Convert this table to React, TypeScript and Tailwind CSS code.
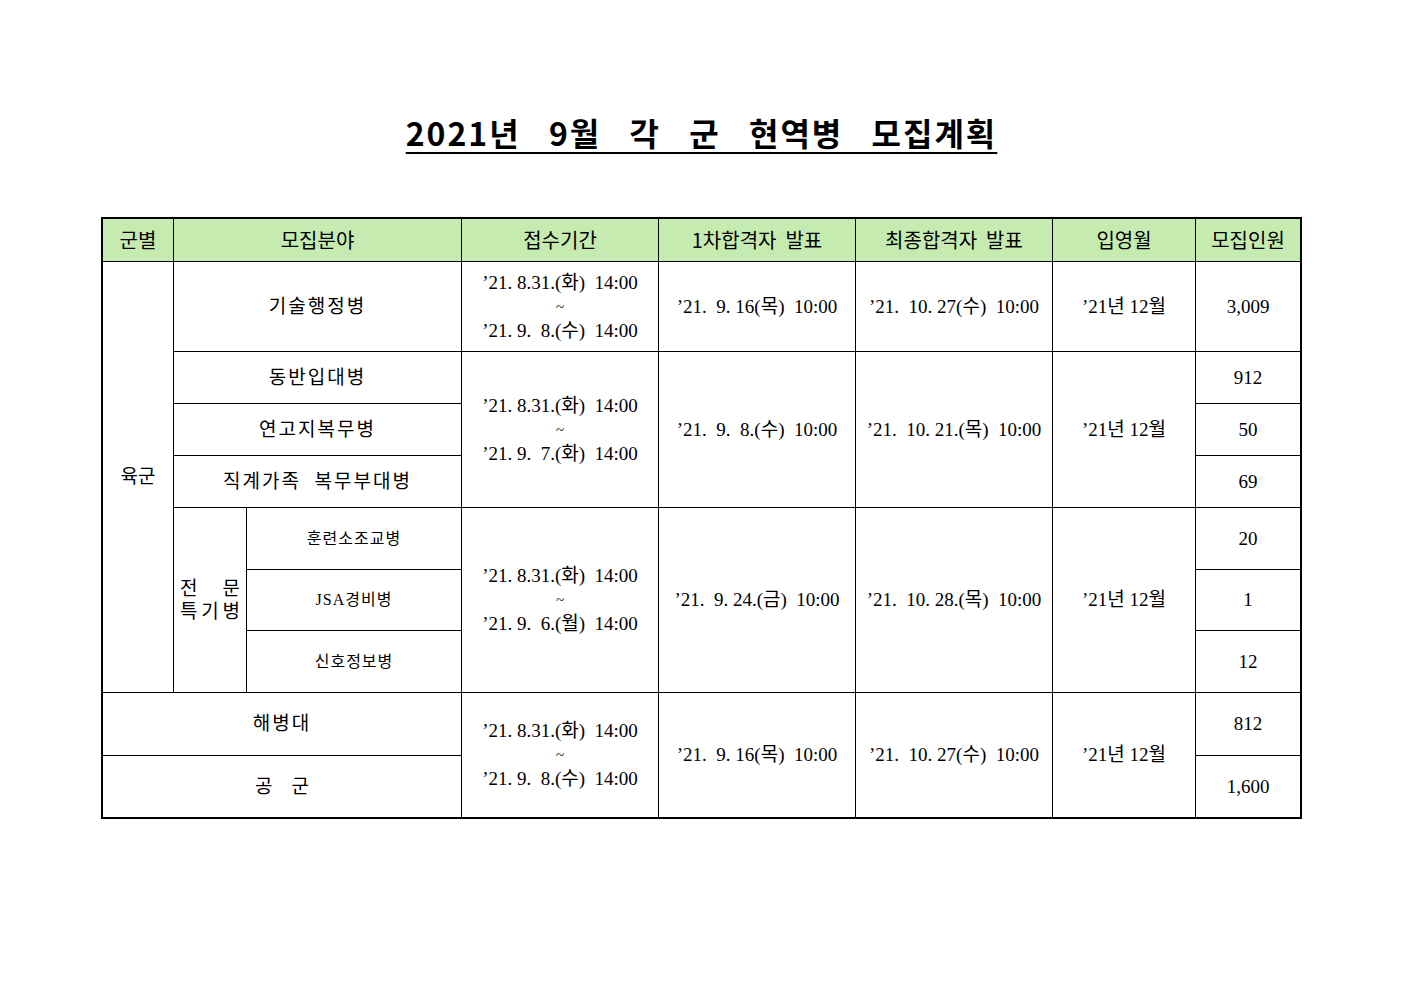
import React from 'react';

const head = "bg-[#c5ebb1] flex items-center justify-center font-['Noto_Sans_CJK_KR',sans-serif] text-[20px] text-black";
const body = "bg-white flex items-center justify-center text-center font-['Liberation_Serif','Noto_Sans_CJK_KR',serif] text-[19px] text-black leading-[24px]";
const small = "bg-white flex items-center justify-center text-center font-['Liberation_Serif','Noto_Sans_CJK_KR',serif] text-[16px] text-black";

const Period: React.FC<{ end: string }> = ({ end }) => (
  <div className="flex flex-col items-center whitespace-pre">
    <span>{"’21. 8.31.(화)  14:00"}</span>
    <span className="text-[15px] leading-[24px]">~</span>
    <span>{end}</span>
  </div>
);

const App: React.FC = () => {
  return (
    <div className="w-[1403px] h-[992px] bg-white pt-[108px]">
      <h1 className="text-center font-['Noto_Sans_CJK_KR',sans-serif] font-bold text-[32px] leading-[48px] tracking-[2px] [word-spacing:19px] text-black">
        <span className="underline decoration-2 underline-offset-[6px]">2021년 9월 각 군 현역병 모집계획</span>
      </h1>

      <div className="mt-[61px] ml-[101px] w-fit border-2 border-black bg-black">
        <div className="grid gap-px grid-cols-[70px_72px_214px_196px_196px_196px_142px_104px] grid-rows-[42px_89px_51px_51px_51px_61px_60px_61px_62px_61px]">
          {/* header */}
          <div className={`${head} col-start-1 row-start-1`}>군별</div>
          <div className={`${head} col-start-2 col-span-2 row-start-1`}>모집분야</div>
          <div className={`${head} col-start-4 row-start-1`}>접수기간</div>
          <div className={`${head} col-start-5 row-start-1 whitespace-pre`}>1차합격자  발표</div>
          <div className={`${head} col-start-6 row-start-1 whitespace-pre`}>최종합격자  발표</div>
          <div className={`${head} col-start-7 row-start-1`}>입영월</div>
          <div className={`${head} col-start-8 row-start-1`}>모집인원</div>

          {/* 육군 */}
          <div className={`${body} col-start-1 row-start-2 row-span-7`}>육군</div>

          <div className={`${body} col-start-2 col-span-2 row-start-2 tracking-[2px]`}>기술행정병</div>
          <div className={`${body} col-start-4 row-start-2`}>
            <Period end={"’21. 9.  8.(수)  14:00"} />
          </div>
          <div className={`${body} col-start-5 row-start-2 whitespace-pre`}>{"’21.  9. 16(목)  10:00"}</div>
          <div className={`${body} col-start-6 row-start-2 whitespace-pre`}>{"’21.  10. 27(수)  10:00"}</div>
          <div className={`${body} col-start-7 row-start-2`}>’21년 12월</div>
          <div className={`${body} col-start-8 row-start-2`}>3,009</div>

          <div className={`${body} col-start-2 col-span-2 row-start-3 tracking-[2px]`}>동반입대병</div>
          <div className={`${body} col-start-2 col-span-2 row-start-4 tracking-[2px]`}>연고지복무병</div>
          <div className={`${body} col-start-2 col-span-2 row-start-5 tracking-[2px] whitespace-pre`}>직계가족  복무부대병</div>
          <div className={`${body} col-start-4 row-start-3 row-span-3`}>
            <Period end={"’21. 9.  7.(화)  14:00"} />
          </div>
          <div className={`${body} col-start-5 row-start-3 row-span-3 whitespace-pre`}>{"’21.  9.  8.(수)  10:00"}</div>
          <div className={`${body} col-start-6 row-start-3 row-span-3 whitespace-pre`}>{"’21.  10. 21.(목)  10:00"}</div>
          <div className={`${body} col-start-7 row-start-3 row-span-3`}>’21년 12월</div>
          <div className={`${body} col-start-8 row-start-3`}>912</div>
          <div className={`${body} col-start-8 row-start-4`}>50</div>
          <div className={`${body} col-start-8 row-start-5`}>69</div>

          <div className={`${body} col-start-2 row-start-6 row-span-3`}>
            <div className="flex flex-col w-[60px] leading-[23px]">
              <div className="flex justify-between"><span>전</span><span>문</span></div>
              <div className="flex justify-between"><span>특</span><span>기</span><span>병</span></div>
            </div>
          </div>
          <div className={`${small} col-start-3 row-start-6 tracking-[1px]`}>훈련소조교병</div>
          <div className={`${small} col-start-3 row-start-7 tracking-[1px]`}>JSA경비병</div>
          <div className={`${small} col-start-3 row-start-8 tracking-[1px]`}>신호정보병</div>
          <div className={`${body} col-start-4 row-start-6 row-span-3`}>
            <Period end={"’21. 9.  6.(월)  14:00"} />
          </div>
          <div className={`${body} col-start-5 row-start-6 row-span-3 whitespace-pre`}>{"’21.  9. 24.(금)  10:00"}</div>
          <div className={`${body} col-start-6 row-start-6 row-span-3 whitespace-pre`}>{"’21.  10. 28.(목)  10:00"}</div>
          <div className={`${body} col-start-7 row-start-6 row-span-3`}>’21년 12월</div>
          <div className={`${body} col-start-8 row-start-6`}>20</div>
          <div className={`${body} col-start-8 row-start-7`}>1</div>
          <div className={`${body} col-start-8 row-start-8`}>12</div>

          {/* 해병대 / 공군 */}
          <div className={`${body} col-start-1 col-span-3 row-start-9 tracking-[2px]`}>해병대</div>
          <div className={`${body} col-start-1 col-span-3 row-start-10 whitespace-pre`}>공    군</div>
          <div className={`${body} col-start-4 row-start-9 row-span-2`}>
            <Period end={"’21. 9.  8.(수)  14:00"} />
          </div>
          <div className={`${body} col-start-5 row-start-9 row-span-2 whitespace-pre`}>{"’21.  9. 16(목)  10:00"}</div>
          <div className={`${body} col-start-6 row-start-9 row-span-2 whitespace-pre`}>{"’21.  10. 27(수)  10:00"}</div>
          <div className={`${body} col-start-7 row-start-9 row-span-2`}>’21년 12월</div>
          <div className={`${body} col-start-8 row-start-9`}>812</div>
          <div className={`${body} col-start-8 row-start-10`}>1,600</div>
        </div>
      </div>
    </div>
  );
};

export default App;
